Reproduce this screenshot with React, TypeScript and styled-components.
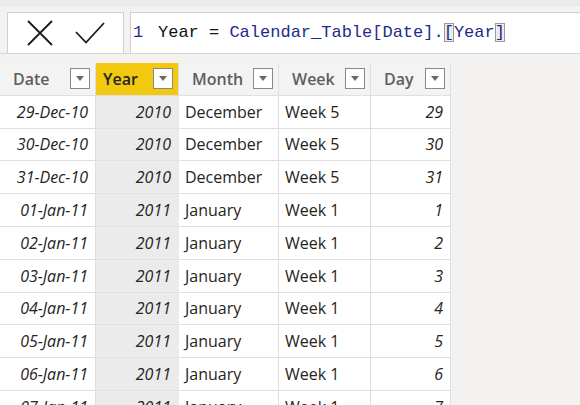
import React from "react";
import styled, { createGlobalStyle } from "styled-components";

const Global = createGlobalStyle`
  html, body { margin: 0; padding: 0; }
  body {
    background: #f3f2f1;
    width: 580px;
    height: 405px;
    overflow: hidden;
    font-family: "Open Sans", "Noto Sans", sans-serif;
  }
`;

const Page = styled.div`
  display: flex;
  flex-direction: column;
  width: 580px;
  height: 405px;
  overflow: hidden;
  background: #f3f2f1;
`;

const TopStrip = styled.div`
  flex: none;
  height: 5px;
  background: #ebebeb;
  border-bottom: 1px solid #e4e4e4;
`;

const FormulaBar = styled.div`
  flex: none;
  box-sizing: border-box;
  display: flex;
  align-items: flex-end;
  gap: 6px;
  padding: 0 0 0 7px;
  height: 48px;
  border-bottom: 1px solid #d6d6d6;
`;

const ActionBox = styled.div`
  width: 117px;
  height: 41px;
  box-sizing: border-box;
  background: #fff;
  border: 1px solid #d2d0ce;
  border-bottom: none;
  display: flex;
  align-items: center;
  justify-content: center;
  gap: 22px;
`;

const CodeBox = styled.div`
  flex: 1;
  height: 41px;
  box-sizing: border-box;
  background: #fff;
  border: 1px solid #d2d0ce;
  border-right: none;
  border-bottom: none;
  display: flex;
  align-items: center;
  font-family: "Liberation Mono", "DejaVu Sans Mono", monospace;
  font-size: 17px;
  white-space: pre;
  padding-left: 2px;
  padding-bottom: 2px;
`;

const Token = styled.span<{ $c: string }>`
  color: ${(p) => p.$c};
`;

const LineNo = styled.span`
  color: #1e2b8a;
  width: 25px;
  display: inline-block;
`;

const Bracket = styled.span`
  color: #1e2b8a;
  background: #ececec;
  outline: 1px solid #9a9a9a;
  outline-offset: -1px;
`;

const Table = styled.div`
  flex: none;
  margin-top: 9px;
  display: grid;
  grid-template-columns: 96px 83px 100px 92px 80px;
  width: 451px;
  grid-auto-rows: 32.8px;
`;

const HeadCell = styled.div<{ $active?: boolean }>`
  display: flex;
  align-items: center;
  justify-content: space-between;
  padding: 0 5px 0 ${(p) => (p.$active ? "7px" : "13px")};
  background: ${(p) => (p.$active ? "#f2c811" : "#f3f3f3")};
  color: ${(p) => (p.$active ? "#252423" : "#605e5c")};
  font-weight: 600;
  font-size: 16px;
  border-right: 1px solid #e1dfdd;
  border-bottom: 1px solid #e1dfdd;
  box-sizing: border-box;
`;

const DropBtn = styled.div`
  width: 20px;
  height: 21px;
  box-sizing: border-box;
  background: #fff;
  border: 1px solid #8a8886;
  display: flex;
  align-items: center;
  justify-content: center;
  &::after {
    content: "";
    border-left: 4.5px solid transparent;
    border-right: 4.5px solid transparent;
    border-top: 5px solid #6b6967;
  }
`;

const Cell = styled.div<{ $align: "left" | "right"; $italic?: boolean; $sel?: boolean }>`
  display: flex;
  align-items: center;
  justify-content: ${(p) => (p.$align === "right" ? "flex-end" : "flex-start")};
  padding: 0 7px 0 6px;
  background: ${(p) => (p.$sel ? "#ebebeb" : "#ffffff")};
  color: #252423;
  font-size: 16px;
  font-style: ${(p) => (p.$italic ? "italic" : "normal")};
  border-right: 1px solid ${(p) => (p.$sel ? "#ebebeb" : "#e1dfdd")};
  border-bottom: 1px solid ${(p) => (p.$sel ? "#e2e2e2" : "#e1dfdd")};
  box-sizing: border-box;
  white-space: nowrap;
`;

const rows = [
  ["29-Dec-10", "2010", "December", "Week 5", "29"],
  ["30-Dec-10", "2010", "December", "Week 5", "30"],
  ["31-Dec-10", "2010", "December", "Week 5", "31"],
  ["01-Jan-11", "2011", "January", "Week 1", "1"],
  ["02-Jan-11", "2011", "January", "Week 1", "2"],
  ["03-Jan-11", "2011", "January", "Week 1", "3"],
  ["04-Jan-11", "2011", "January", "Week 1", "4"],
  ["05-Jan-11", "2011", "January", "Week 1", "5"],
  ["06-Jan-11", "2011", "January", "Week 1", "6"],
  ["07-Jan-11", "2011", "January", "Week 1", "7"],
];

const headers = ["Date", "Year", "Month", "Week", "Day"];
const colDefs: { align: "left" | "right"; italic: boolean }[] = [
  { align: "right", italic: true },
  { align: "right", italic: true },
  { align: "left", italic: false },
  { align: "left", italic: false },
  { align: "right", italic: true },
];

export default function App() {
  return (
    <Page>
      <Global />
      <TopStrip />
      <FormulaBar>
        <ActionBox>
          <svg width="26" height="26" viewBox="0 0 26 26">
            <path d="M1 1 L25 25 M25 1 L1 25" stroke="#1b1b1b" strokeWidth="1.8" fill="none" />
          </svg>
          <svg width="30" height="22" viewBox="0 0 30 22">
            <path d="M1 10 L11 20.5 L29 1" stroke="#1b1b1b" strokeWidth="1.8" fill="none" />
          </svg>
        </ActionBox>
        <CodeBox>
          <LineNo>1</LineNo>
          <Token $c="#111">Year = </Token>
          <Token $c="#1e2b8a">Calendar_Table[Date].</Token>
          <Bracket>[</Bracket>
          <Token $c="#1e2b8a">Year</Token>
          <Bracket>]</Bracket>
        </CodeBox>
      </FormulaBar>
      <Table>
        {headers.map((h, i) => (
          <HeadCell key={h} $active={i === 1}>
            {h}
            <DropBtn />
          </HeadCell>
        ))}
        {rows.map((r, ri) =>
          r.map((v, ci) => (
            <Cell
              key={`${ri}-${ci}`}
              $align={colDefs[ci].align}
              $italic={colDefs[ci].italic}
              $sel={ci === 1}
            >
              {v}
            </Cell>
          ))
        )}
      </Table>
    </Page>
  );
}
